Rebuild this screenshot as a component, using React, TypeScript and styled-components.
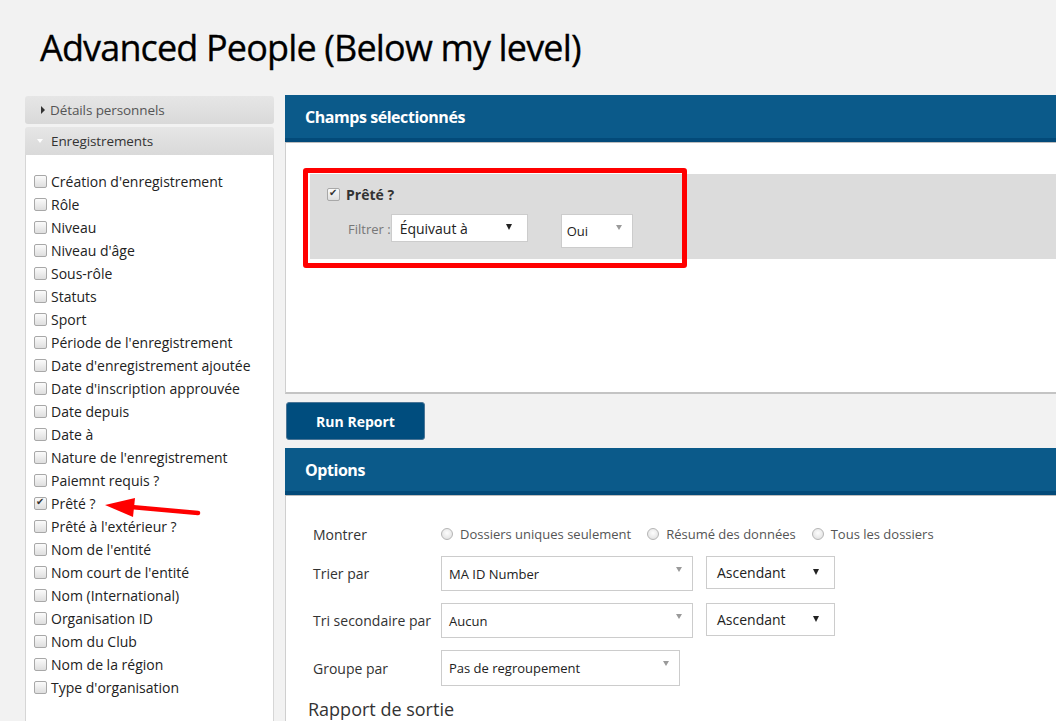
import React from "react";
import styled, { createGlobalStyle } from "styled-components";

const GlobalStyle = createGlobalStyle`
  html, body {
    margin: 0;
    padding: 0;
    background: #f2f2f2;
    overflow: hidden;
  }
  body {
    font-family: "Open Sans", "DejaVu Sans", sans-serif;
    color: #333;
  }
`;

const fields = [
  "Création d'enregistrement",
  "Rôle",
  "Niveau",
  "Niveau d'âge",
  "Sous-rôle",
  "Statuts",
  "Sport",
  "Période de l'enregistrement",
  "Date d'enregistrement ajoutée",
  "Date d'inscription approuvée",
  "Date depuis",
  "Date à",
  "Nature de l'enregistrement",
  "Paiemnt requis ?",
  "Prêté ?",
  "Prêté à l'extérieur ?",
  "Nom de l'entité",
  "Nom court de l'entité",
  "Nom (International)",
  "Organisation ID",
  "Nom du Club",
  "Nom de la région",
  "Type d'organisation",
];

const App: React.FC = () => {
  return (
    <Page>
      <GlobalStyle />
      <Title>Advanced People (Below my level)</Title>
      <Content>
        <Sidebar>
          <AccordionHeader>
            <Caret $open={false} />
            Détails personnels
          </AccordionHeader>
          <AccordionHeader $active>
            <Caret $open />
            Enregistrements
          </AccordionHeader>
          <FieldList>
            {fields.map((f) => (
              <FieldItem key={f}>
                <Checkbox $checked={f === "Prêté ?"} />
                <span>{f}</span>
                {f === "Prêté ?" && (
                  <Arrow viewBox="0 0 100 28" width="100" height="28">
                    <line
                      x1="28"
                      y1="16"
                      x2="95"
                      y2="22"
                      stroke="#f00"
                      strokeWidth="4.5"
                      strokeLinecap="round"
                    />
                    <polygon points="2,14 32,7 30,26" fill="#f00" />
                  </Arrow>
                )}
              </FieldItem>
            ))}
          </FieldList>
        </Sidebar>

        <Main>
          <PanelHeader>Champs sélectionnés</PanelHeader>
          <SelectedBody>
            <FilterRow>
              <Highlight />
              <FilterTitle>
                <Checkbox $checked />
                <strong>Prêté ?</strong>
              </FilterTitle>
              <FilterLine>
                <FilterLabel>Filtrer :</FilterLabel>
                <Select $w={137} $h={28} $size={14} $pad={8}>
                  Équivaut à
                  <DarkArrow />
                </Select>
                <Select $w={72} $h={34} $size={13} $pad={5} $ml={33}>
                  Oui
                  <LightArrow />
                </Select>
              </FilterLine>
            </FilterRow>
          </SelectedBody>

          <RunButton>Run Report</RunButton>

          <PanelHeader>Options</PanelHeader>
          <OptionsBody>
            <OptionsGrid>
              <OptLabel>Montrer</OptLabel>
              <Radios>
                <RadioOpt>
                  <Radio />
                  Dossiers uniques seulement
                </RadioOpt>
                <RadioOpt>
                  <Radio />
                  Résumé des données
                </RadioOpt>
                <RadioOpt>
                  <Radio />
                  Tous les dossiers
                </RadioOpt>
              </Radios>

              <OptLabel>Trier par</OptLabel>
              <SelectPair>
                <Select $w={252} $h={35} $size={13} $pad={7}>
                  MA ID Number
                  <LightArrow />
                </Select>
                <Select $w={129} $h={33} $size={14} $pad={10} $ml={13} $top>
                  Ascendant
                  <DarkArrow />
                </Select>
              </SelectPair>

              <OptLabel>Tri secondaire par</OptLabel>
              <SelectPair>
                <Select $w={252} $h={35} $size={13} $pad={7}>
                  Aucun
                  <LightArrow />
                </Select>
                <Select $w={129} $h={33} $size={14} $pad={10} $ml={13} $top>
                  Ascendant
                  <DarkArrow />
                </Select>
              </SelectPair>

              <OptLabel>Groupe par</OptLabel>
              <SelectPair>
                <Select $w={239} $h={36} $size={13} $pad={7}>
                  Pas de regroupement
                  <LightArrow />
                </Select>
              </SelectPair>
            </OptionsGrid>
            <SubTitle>Rapport de sortie</SubTitle>
          </OptionsBody>
        </Main>
      </Content>
    </Page>
  );
};

export default App;

const Page = styled.div`
  width: 1056px;
  height: 721px;
  overflow: hidden;
`;

const Title = styled.h1`
  margin: 0;
  padding: 28px 0 0 40px;
  height: 96px;
  box-sizing: border-box;
  font-size: 36px;
  line-height: 40px;
  font-weight: 400;
  letter-spacing: -0.85px;
  color: #000;
  -webkit-text-stroke: 0.3px #000;
`;

const Content = styled.div`
  display: flex;
  align-items: flex-start;
  padding-left: 25px;
  gap: 11px;
`;

const Sidebar = styled.div`
  flex: 0 0 249px;
  display: flex;
  flex-direction: column;
`;

const AccordionHeader = styled.div<{ $active?: boolean }>`
  display: flex;
  align-items: center;
  height: 28px;
  margin-top: ${({ $active }) => ($active ? "3px" : "0")};
  padding-left: 13px;
  background: linear-gradient(#e6e6e6, #d9d9d9);
  border-radius: 3px 3px ${({ $active }) => ($active ? "0 0" : "3px 3px")};
  font-size: 13.5px;
  letter-spacing: -0.1px;
  color: ${({ $active }) => ($active ? "#333" : "#555")};
`;

const Caret = styled.span<{ $open: boolean }>`
  display: inline-block;
  width: 0;
  height: 0;
  margin-right: 8px;
  ${({ $open }) =>
    $open
      ? `border-left: 3.5px solid transparent;
         border-right: 3.5px solid transparent;
         border-top: 4px solid #fff;
         margin-left: -1px;`
      : `border-top: 4px solid transparent;
         border-bottom: 4px solid transparent;
         border-left: 4px solid #333;
         margin-left: 3px;
         margin-right: 5px;`}
`;

const FieldList = styled.ul`
  list-style: none;
  margin: 0;
  padding: 15px 0 40px;
  background: #fff;
  border-left: 1px solid #d6d6d6;
  border-right: 1px solid #d6d6d6;
  min-height: 600px;
`;

const FieldItem = styled.li`
  position: relative;
  display: flex;
  align-items: center;
  height: 23px;
  padding-left: 8px;
  font-size: 14px;
  color: #222;
  white-space: nowrap;
`;

const Checkbox = styled.span<{ $checked?: boolean }>`
  position: relative;
  flex: 0 0 auto;
  width: 11px;
  height: 11px;
  margin-right: 4px;
  border: 1px solid #a8a8a8;
  border-radius: 2px;
  background: linear-gradient(#fbfbfb, #dedede);
  &:after {
    content: ${({ $checked }) => ($checked ? '"✔"' : "none")};
    position: absolute;
    left: 1px;
    top: -2px;
    font-size: 10px;
    color: #333;
    font-family: "DejaVu Sans", sans-serif;
  }
`;

const Arrow = styled.svg`
  position: absolute;
  left: 77px;
  top: -1px;
`;

const Main = styled.div`
  flex: 0 0 800px;
  display: flex;
  flex-direction: column;
  margin-top: -1px;
`;

const PanelHeader = styled.div`
  height: 43px;
  padding-left: 20px;
  display: flex;
  align-items: center;
  background: #0b5a8a;
  border-bottom: 4px solid #034a79;
  color: #fff;
  font-size: 16px;
  font-weight: 700;
  letter-spacing: -0.45px;
`;

const SelectedBody = styled.div`
  background: #fff;
  border-top: 1px solid #bdbdbd;
  border-left: 1px solid #cfcfcf;
  border-bottom: 2px solid #c4c4c4;
  height: 252px;
  box-sizing: border-box;
  padding: 31px 0 0 24px;
`;

const FilterRow = styled.div`
  position: relative;
  height: 85px;
  background: #dcdcdc;
  padding: 10px 0 0 17px;
  box-sizing: border-box;
`;

const Highlight = styled.div`
  position: absolute;
  left: -7px;
  top: -6px;
  width: 384px;
  height: 100px;
  box-sizing: border-box;
  border: 5px solid #ff0000;
  border-radius: 3px;
  pointer-events: none;
`;

const FilterTitle = styled.div`
  display: flex;
  align-items: center;
  height: 20px;
  font-size: 14px;
  color: #333;
  strong {
    font-weight: 700;
    margin-left: 2px;
  }
`;

const FilterLine = styled.div`
  display: flex;
  align-items: flex-start;
  margin-top: 10px;
  padding-left: 21px;
`;

const FilterLabel = styled.span`
  font-size: 13px;
  color: #777;
  margin-right: 0;
  line-height: 30px;
`;

const Select = styled.div<{
  $w: number;
  $h: number;
  $size: number;
  $pad: number;
  $ml?: number;
  $top?: boolean;
}>`
  position: relative;
  display: flex;
  align-items: ${({ $top }) => ($top ? "flex-start" : "center")};
  padding-top: ${({ $top }) => ($top ? "6px" : "0")};
  width: ${({ $w }) => $w}px;
  height: ${({ $h }) => $h}px;
  margin-left: ${({ $ml }) => $ml ?? 0}px;
  padding-left: ${({ $pad }) => $pad}px;
  box-sizing: border-box;
  background: #fff;
  border: 1px solid #cccccc;
  font-size: ${({ $size }) => $size}px;
  color: #222;
`;

const DarkArrow = styled.span`
  position: absolute;
  right: 15px;
  top: 50%;
  margin-top: -4px;
  border-left: 3px solid transparent;
  border-right: 3px solid transparent;
  border-top: 6px solid #222;
`;

const LightArrow = styled.span`
  position: absolute;
  right: 10px;
  top: 10px;
  border-left: 3px solid transparent;
  border-right: 3px solid transparent;
  border-top: 5px solid #9a9a9a;
`;

const RunButton = styled.button`
  align-self: flex-start;
  margin: 8px 0 8px 1px;
  width: 139px;
  height: 38px;
  background: #004d7e;
  border: 1px solid #4a7596;
  border-radius: 3px;
  color: #fff;
  font-family: "Open Sans", sans-serif;
  font-size: 14px;
  font-weight: 700;
`;

const OptionsBody = styled.div`
  background: #fff;
  border-top: 1px solid #bdbdbd;
  border-left: 1px solid #cfcfcf;
  padding: 28px 0 40px 27px;
  min-height: 300px;
`;

const OptionsGrid = styled.div`
  display: grid;
  grid-template-columns: 128px auto;
  row-gap: 12px;
  align-items: center;
`;

const OptLabel = styled.div`
  font-size: 14px;
  color: #333;
`;

const Radios = styled.div`
  display: flex;
  align-items: center;
  gap: 16px;
  height: 20px;
`;

const RadioOpt = styled.label`
  display: flex;
  align-items: center;
  font-size: 13px;
  color: #555;
  white-space: nowrap;
`;

const Radio = styled.span`
  width: 12px;
  height: 12px;
  margin-right: 7px;
  border: 1px solid #b5b5b5;
  box-sizing: border-box;
  border-radius: 50%;
  background: radial-gradient(circle at 50% 40%, #fdfdfd, #dcdcdc);
`;

const SelectPair = styled.div`
  display: flex;
  align-items: flex-start;
`;

const SubTitle = styled.h3`
  margin: 11px 0 0 -5px;
  font-size: 18px;
  font-weight: 400;
  color: #333;
`;
